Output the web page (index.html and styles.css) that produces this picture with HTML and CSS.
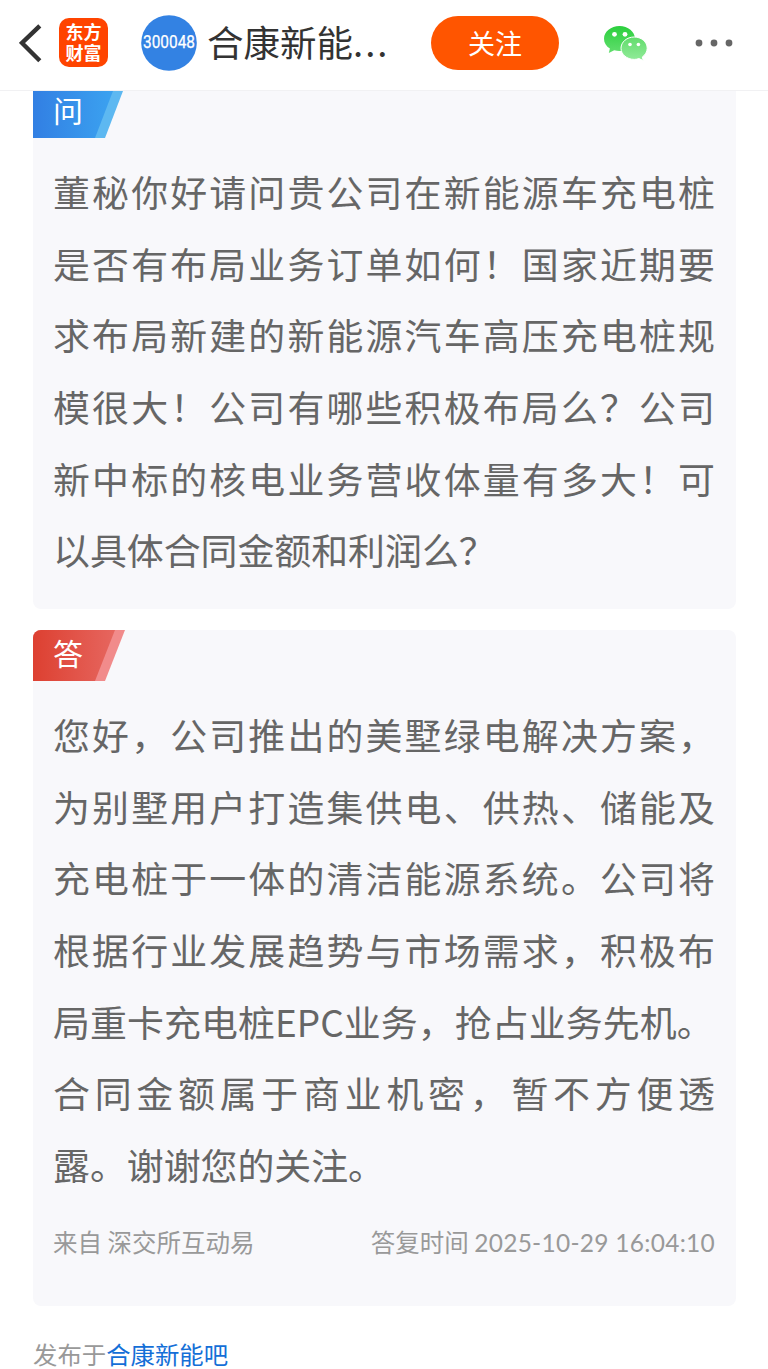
FILE: index.html
```html
<!DOCTYPE html>
<html lang="zh-CN">
<head>
<meta charset="utf-8">
<title>合康新能</title>
<link rel="stylesheet" href="styles.css">
</head>
<body>
<header class="bar">
  <svg class="back" width="24" height="42" viewBox="0 0 24 42"><path d="M20.800 3.800 3 21 20.800 38.800" fill="none" stroke="#333" stroke-width="4.400"/></svg>
  <div class="logo">东方<br>财富</div>
  <svg class="avatar" width="56" height="56" viewBox="0 0 56 56"><circle cx="28" cy="28" r="27.800" fill="#3382e3"/><text class="code" x="2" y="33.200" textLength="52" lengthAdjust="spacingAndGlyphs">300048</text></svg>
  <h1 class="title">合康新能<span class="dots">...</span></h1>
  <button class="follow">关注</button>
  <svg class="wechat" width="44" height="36" viewBox="0 0 44 36">
    <defs>
      <linearGradient id="g1" x1="0" y1="0" x2="0" y2="1"><stop offset="0" stop-color="#2bcf3d"/><stop offset="1" stop-color="#62de6e"/></linearGradient>
      <linearGradient id="g2" x1="0" y1="0" x2="0" y2="1"><stop offset="0" stop-color="#62dc6c"/><stop offset="1" stop-color="#92eb9a"/></linearGradient>
    </defs>
    <path d="M15.500 1C7 1 0 6.600 0 13.700c0 4 2.200 7.500 5.900 9.900L4.800 28l5.400-2.700c1.700.5 3.500.8 5.300.8 8.500 0 15.500-5.500 15.500-12.400S24 1 15.500 1z" fill="url(#g1)"/>
    <path d="M30.200 12c-7.300 0-13.200 5-13.200 11.200s5.900 11.200 13.200 11.200c1.700 0 3.300-.3 4.800-.8l4.300 2-1-3.600c2.900-2 4.900-5.200 4.900-8.800C43.200 17 37.500 12 30.200 12z" fill="url(#g2)" stroke="#fff" stroke-width="1"/>
    <g fill="#fff"><circle cx="10.500" cy="9.300" r="2.400"/><circle cx="21" cy="9.300" r="2.400"/><circle cx="26" cy="19.500" r="1.800"/><circle cx="34.400" cy="19.500" r="1.800"/></g>
  </svg>
  <svg class="more" width="38" height="8" viewBox="0 0 38 8" fill="#666"><circle cx="4" cy="4" r="3.400"/><circle cx="19" cy="4" r="3.400"/><circle cx="34" cy="4" r="3.400"/></svg>
</header>
<main class="content">
  <section class="card ask">
    <div class="tag"><svg class="tag-bg" width="90" height="47" viewBox="0 0 90 47"><defs><linearGradient id="b"><stop offset="0" stop-color="#327fe3"/><stop offset="1" stop-color="#3ba2f0"/></linearGradient></defs><path d="M0 0H90L72 47H0z" fill="#5db8f1"/><path d="M0 0H80L62 47H0z" fill="url(#b)"/></svg><span class="tag-text">问</span></div>
    <div class="text">
      <p>董秘你好请问贵公司在新能源车充电桩</p>
      <p>是否有布局业务订单如何！国家近期要</p>
      <p>求布局新建的新能源汽车高压充电桩规</p>
      <p>模很大！公司有哪些积极布局么？公司</p>
      <p>新中标的核电业务营收体量有多大！可</p>
      <p class="last">以具体合同金额和利润么？</p>
    </div>
  </section>
  <section class="card answer">
    <div class="tag"><svg class="tag-bg" width="92" height="51" viewBox="0 0 92 51"><defs><linearGradient id="r"><stop offset="0" stop-color="#dd4031"/><stop offset="1" stop-color="#e6665f"/></linearGradient></defs><path d="M0 0H92L72 51H0z" fill="#f18b8b"/><path d="M0 0H82L62 51H0z" fill="url(#r)"/></svg><span class="tag-text">答</span></div>
    <div class="text">
      <p>您好，公司推出的美墅绿电解决方案，</p>
      <p>为别墅用户打造集供电、供热、储能及</p>
      <p>充电桩于一体的清洁能源系统。公司将</p>
      <p>根据行业发展趋势与市场需求，积极布</p>
      <p class="tight">局重卡充电桩EPC业务，抢占业务先机。</p>
      <p>合同金额属于商业机密，暂不方便透</p>
      <p class="last">露。谢谢您的关注。</p>
    </div>
    <div class="meta"><span>来自 深交所互动易</span><span>答复时间 <span class="date">2025-10-29 16:04:10</span></span></div>
  </section>
  <div class="source">发布于<a class="link">合康新能吧</a></div>
</main>
</body>
</html>
```
FILE: styles.css
```css
* { box-sizing: border-box; margin: 0; padding: 0; }
body { background: #fff; font-family: "Noto Sans CJK SC", sans-serif; color: #666; height: 1369px; overflow: hidden; }
.bar { height: 91px; display: flex; align-items: center; padding: 0 0 5px 19px; border-bottom: 1px solid #f1f1f3; }
.bar > * { flex: none; }
.logo { width: 49px; height: 49px; margin-left: 16px; padding-top: 3px; border-radius: 10px; background: #ff4400; color: #fff; text-align: center; font-size: 18px; line-height: 20.500px; font-weight: 700; }
.avatar { margin-left: 33px; }
.code { font: 400 17.500px Roboto, sans-serif; fill: #fff; stroke: #fff; stroke-width: .25px; }
.title { margin-left: 10px; padding-bottom: 1px; width: 190px; font-size: 36.500px; line-height: 50px; font-weight: 400; color: #333; white-space: nowrap; }
.dots { letter-spacing: 2px; }
.follow { margin-left: 34px; width: 128px; height: 54px; border: 0; border-radius: 27px; background: #ff5500; color: #fff; font: 400 27px "Noto Sans CJK SC", sans-serif; }
.wechat { margin-left: 45px; }
.more { margin-left: 47px; }
.content { padding: 0 32px 0 33px; }
.card { background: #f8f8fb; overflow: hidden; }
.ask { height: 518px; border-radius: 0 0 8px 8px; }
.answer { height: 676px; margin-top: 21px; border-radius: 8px; }
.tag { display: grid; align-items: start; }
.tag > * { grid-area: 1 / 1; }
.tag-bg { display: block; }
.tag-text { padding-left: 20px; font-size: 30px; line-height: 37px; color: #fff; }
.answer .tag-text { line-height: 45px; }
.text { padding: 18px 21px 0 20px; font-size: 36.900px; line-height: 71.700px; }
.text p { height: 71.700px; white-space: nowrap; text-align: justify; text-align-last: justify; }
.text .last, .text .tight { text-align: left; text-align-last: left; }
.text .tight { letter-spacing: .1px; }
.meta { display: flex; justify-content: space-between; padding: 0 21px 0 20px; margin-top: 21px; font-size: 24.500px; line-height: 40px; color: #999; }
.date { font-family: Lato, sans-serif; letter-spacing: .27px; }
.source { margin-top: 28px; font-size: 24.400px; line-height: 40px; color: #999; white-space: nowrap; }
.link { color: #146fd7; }
```
